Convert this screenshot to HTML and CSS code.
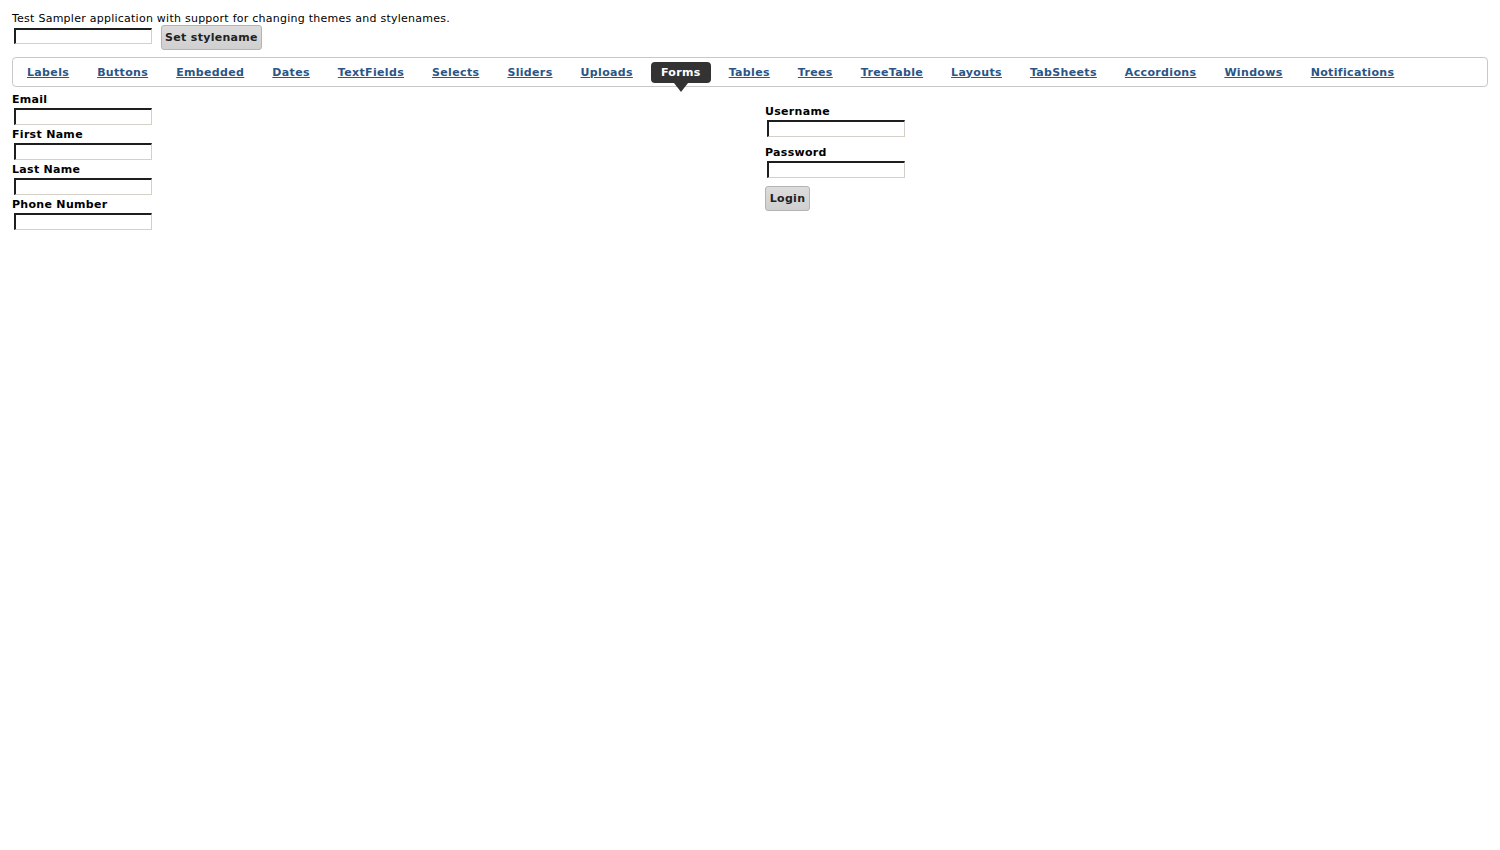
FILE: index.html
```html
<!DOCTYPE html>
<html>
<head>
<meta charset="utf-8">
<link rel="stylesheet" href="styles.css">
</head>
<body>
<div class="page">
  <div class="intro">Test Sampler application with support for changing themes and stylenames.</div>
  <div class="style-row">
    <input class="field" type="text">
    <button class="btn btn-style">Set stylename</button>
  </div>
  <nav class="tabs">
    <a class="tab" href="#">Labels</a>
    <a class="tab" href="#">Buttons</a>
    <a class="tab" href="#">Embedded</a>
    <a class="tab" href="#">Dates</a>
    <a class="tab" href="#">TextFields</a>
    <a class="tab" href="#">Selects</a>
    <a class="tab" href="#">Sliders</a>
    <a class="tab" href="#">Uploads</a>
    <a class="tab tab-selected" href="#">Forms</a>
    <a class="tab" href="#">Tables</a>
    <a class="tab" href="#">Trees</a>
    <a class="tab" href="#">TreeTable</a>
    <a class="tab" href="#">Layouts</a>
    <a class="tab" href="#">TabSheets</a>
    <a class="tab" href="#">Accordions</a>
    <a class="tab" href="#">Windows</a>
    <a class="tab" href="#">Notifications</a>
  </nav>
  <div class="content">
    <div class="form-left">
      <label class="cap">Email</label>
      <input class="field" type="text">
      <label class="cap">First Name</label>
      <input class="field" type="text">
      <label class="cap">Last Name</label>
      <input class="field" type="text">
      <label class="cap">Phone Number</label>
      <input class="field" type="text">
    </div>
    <div class="form-login">
      <label class="cap">Username</label>
      <input class="field" type="text">
      <label class="cap cap-gap">Password</label>
      <input class="field" type="text">
      <button class="btn btn-login">Login</button>
    </div>
  </div>
</div>
</body>
</html>
```

FILE: styles.css
```css
html, body {
  margin: 0;
  padding: 0;
  background: #fff;
}
body {
  font-family: "DejaVu Sans", sans-serif;
  font-size: 11px;
  color: #000;
}
.page {
  padding: 12px 12px 0 12px;
}
.intro {
  line-height: 14px;
  height: 13px;
  letter-spacing: 0.25px;
}
.style-row {
  display: flex;
  align-items: flex-start;
  gap: 9px;
  height: 25px;
}
.field {
  box-sizing: border-box;
  display: block;
  width: 138px;
  height: 17px;
  margin: 0 0 0 2px;
  padding: 0 2px;
  border-style: solid;
  border-width: 2px 1px 1px 2px;
  border-color: #1e1e1e #d4d0c8 #d4d0c8 #1e1e1e;
  background: #fff;
  font-family: "DejaVu Sans", sans-serif;
  font-size: 11px;
  outline: none;
}
.style-row .field {
  margin-top: 3px;
  height: 16px;
}
.btn {
  box-sizing: border-box;
  height: 25px;
  padding: 0;
  border: 1px solid #b3b3b3;
  border-radius: 3px;
  background: linear-gradient(#dcdcdc, #cfcfcf);
  color: #222;
  font-family: "DejaVu Sans", sans-serif;
  font-size: 11px;
  font-weight: bold;
  letter-spacing: 0.3px;
  white-space: nowrap;
}
.btn-style {
  width: 101px;
}
.tabs {
  margin-top: 7px;
  box-sizing: border-box;
  height: 30px;
  border: 1px solid #c8c8c8;
  border-radius: 4px;
  display: flex;
  align-items: center;
}
.tab {
  position: relative;
  margin: 0 4px;
  padding: 0 10px;
  height: 21px;
  line-height: 22px;
  font-weight: bold;
  color: #2b5585;
  text-decoration: underline;
  letter-spacing: 0.34px;
  border-radius: 4px;
  white-space: nowrap;
}
.tab-selected {
  background: #333;
  color: #fff;
  text-decoration: none;
}
.tab-selected::after {
  content: "";
  position: absolute;
  left: 50%;
  top: 21px;
  margin-left: -7px;
  border-left: 7px solid transparent;
  border-right: 7px solid transparent;
  border-top: 9px solid #333;
}
.content {
  display: grid;
  grid-template-columns: 753px 1fr;
  padding-top: 6px;
}
.cap {
  display: block;
  font-weight: bold;
  line-height: 14px;
  height: 14px;
  letter-spacing: 0.3px;
  margin-bottom: 1px;
}
.form-left .field {
  margin-bottom: 3px;
}
.form-login {
  padding-top: 12px;
}
.form-login .cap-gap {
  margin-top: 9px;
}
.btn-login {
  margin-top: 8px;
  width: 45px;
}
```
